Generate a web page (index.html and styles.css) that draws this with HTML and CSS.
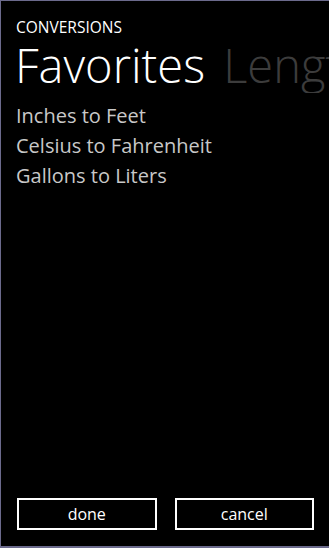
FILE: index.html
```html
<!DOCTYPE html>
<html>
<head>
<meta charset="utf-8">
<link rel="stylesheet" href="styles.css">
</head>
<body>
<div class="screen">
  <div class="app-title">CONVERSIONS</div>
  <div class="pivot-headers">
    <span class="pivot-item active">Favorites</span>
    <span class="pivot-item">Length</span>
  </div>
  <ul class="list">
    <li>Inches to Feet</li>
    <li>Celsius to Fahrenheit</li>
    <li>Gallons to Liters</li>
  </ul>
  <div class="spacer"></div>
  <div class="buttons">
    <button class="btn">done</button>
    <button class="btn">cancel</button>
  </div>
</div>
</body>
</html>
```
FILE: styles.css
```css
html, body {
  margin: 0;
  padding: 0;
  background: #000;
}
.screen {
  box-sizing: border-box;
  width: 329px;
  height: 548px;
  border-top: 1px solid #6b6a8c;
  border-left: 1px solid #6b6a8c;
  border-bottom: 2px solid #6b6a8c;
  display: flex;
  flex-direction: column;
  overflow: hidden;
  font-family: "Open Sans", "Noto Sans", sans-serif;
  color: #fff;
}
.app-title {
  font-size: 15.5px;
  line-height: 20px;
  padding: 16px 0 0 15px;
}
.pivot-headers {
  white-space: nowrap;
  overflow: hidden;
  padding-left: 14px;
  font-size: 47px;
  line-height: 56px;
  font-weight: 300;
}
.pivot-item {
  margin-right: 6px;
  color: #3c3c3c;
}
.pivot-item.active {
  color: #fff;
}
.list {
  list-style: none;
  margin: 8px 0 0 0;
  padding: 0 0 0 15px;
  font-size: 20px;
  line-height: 30px;
  color: #c8c8c8;
}
.spacer {
  flex: 1;
}
.buttons {
  display: flex;
  gap: 18px;
  padding: 0 15px 16px 16px;
}
.btn {
  flex: 1;
  height: 32px;
  background: #000;
  border: 2px solid #fff;
  border-radius: 0;
  color: #fff;
  font-family: "Open Sans", "Noto Sans", sans-serif;
  font-size: 16px;
  padding: 0;
  line-height: 26px;
}
```
